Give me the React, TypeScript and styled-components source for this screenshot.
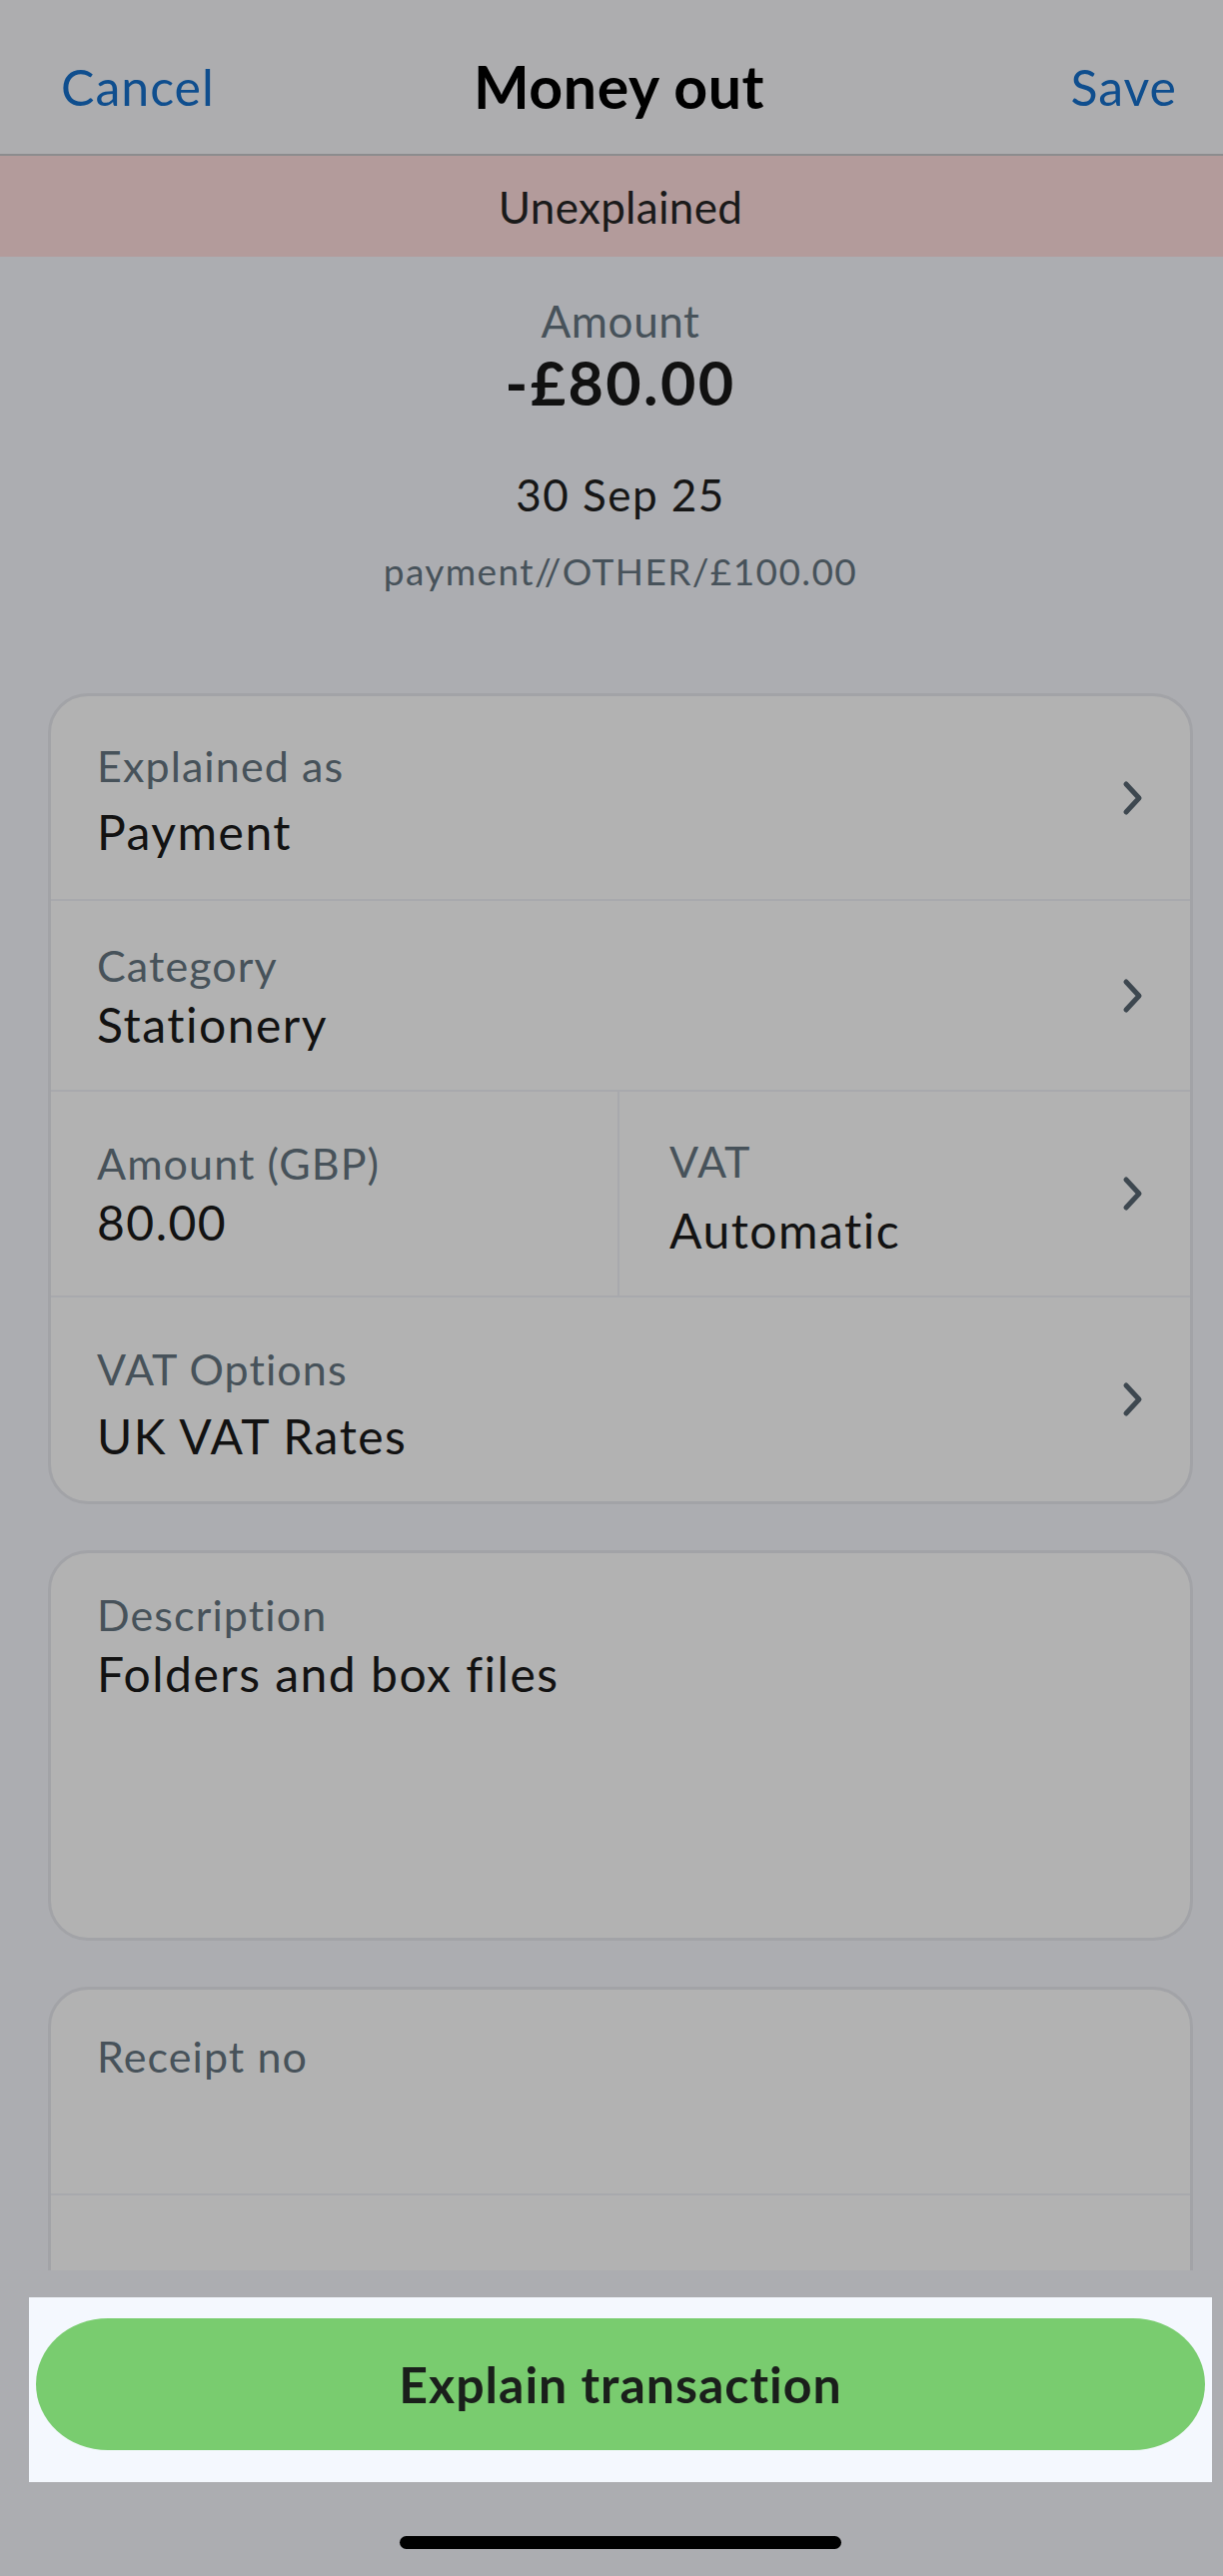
import React from "react";
import styled, { createGlobalStyle } from "styled-components";

const GlobalStyle = createGlobalStyle`
  html, body {
    margin: 0;
    padding: 0;
    background: #acadb1;
    overflow: hidden;
  }
  body {
    font-family: Lato, "Open Sans", sans-serif;
    -webkit-font-smoothing: antialiased;
  }
`;

const Screen = styled.div`
  width: 1242px;
  height: 2579px;
  display: flex;
  flex-direction: column;
  background: #acadb1;
`;

const NavBar = styled.header`
  height: 156px;
  flex: none;
  box-sizing: border-box;
  display: grid;
  grid-template-columns: 1fr auto 1fr;
  align-items: center;
  padding: 20px 64px 0 61px;
  background: #adadaf;
  border-bottom: 2px solid #8c8c8e;
`;

const NavButton = styled.span<{ $align: "left" | "right" }>`
  justify-self: ${(p) => (p.$align === "left" ? "start" : "end")};
  color: #0f4e8e;
  font-size: 50px;
  line-height: 60px;
  letter-spacing: 1px;
`;

const NavTitle = styled.h1`
  margin: 0;
  font-size: 59px;
  line-height: 64px;
  font-weight: 700;
  letter-spacing: 0.6px;
  color: #000;
`;

const StatusBanner = styled.div`
  height: 101px;
  flex: none;
  display: flex;
  align-items: center;
  justify-content: center;
  background: #b39b9b;
  color: #1a1a1a;
  font-size: 44px;
  letter-spacing: 0.3px;
`;

const Scroll = styled.main`
  height: 2016px;
  flex: none;
  overflow: hidden;
  padding: 0 48px;
  display: flex;
  flex-direction: column;
`;

const Summary = styled.section`
  display: flex;
  flex-direction: column;
  align-items: center;
  padding: 36px 0 98px;
`;

const SummaryLabel = styled.div`
  color: #47525a;
  font-size: 44px;
  line-height: 56px;
  letter-spacing: 0.6px;
`;

const SummaryAmount = styled.div`
  margin-top: 2px;
  color: #111;
  font-size: 61px;
  line-height: 64px;
  font-weight: 700;
  letter-spacing: 2.4px;
`;

const SummaryDate = styled.div`
  margin-top: 52px;
  color: #161616;
  font-size: 44px;
  line-height: 56px;
  letter-spacing: 1.5px;
`;

const SummaryRef = styled.div`
  margin-top: 25px;
  color: #47525a;
  font-size: 37px;
  line-height: 48px;
  letter-spacing: 1.4px;
`;

const Card = styled.div<{ $height?: number; $open?: boolean }>`
  flex: none;
  box-sizing: border-box;
  background: #b2b2b2;
  border: 3px solid #a2a3a7;
  border-radius: 40px;
  overflow: hidden;
  margin-bottom: ${(p) => (p.$open ? "0" : "46px")};
  height: ${(p) => (p.$height ? `${p.$height}px` : "auto")};
  ${(p) => p.$open && "border-bottom-left-radius: 0; border-bottom-right-radius: 0;"}
`;

const Row = styled.div<{ $height: number; $last?: boolean }>`
  height: ${(p) => p.$height}px;
  box-sizing: border-box;
  display: flex;
  align-items: stretch;
  border-bottom: ${(p) => (p.$last ? "none" : "2px solid #a8a9ad")};
`;

const Cell = styled.div<{ $divider?: boolean; $inset?: number }>`
  flex: 1;
  display: flex;
  align-items: center;
  padding: 0 45px 0 ${(p) => p.$inset ?? 46}px;
  border-right: ${(p) => (p.$divider ? "2px solid #a8a9ad" : "none")};
`;

const Field = styled.div<{ $gap?: number; $top?: number; $shift?: number }>`
  flex: 1;
  display: flex;
  flex-direction: column;
  align-self: ${(p) => (p.$top !== undefined ? "flex-start" : "center")};
  padding-top: ${(p) => p.$top ?? p.$shift ?? 0}px;
  gap: ${(p) => p.$gap ?? 0}px;
`;

const Label = styled.div`
  color: #47525a;
  font-size: 43px;
  line-height: 56px;
  letter-spacing: 1.1px;
`;

const Value = styled.div`
  color: #121212;
  font-size: 48px;
  line-height: 62px;
  letter-spacing: 1.5px;
`;

const Chevron = () => (
  <svg width="24" height="36" viewBox="0 0 24 36" fill="none">
    <path
      d="M5 4 L18 18 L5 32"
      stroke="#3e4850"
      strokeWidth="5"
      strokeLinecap="round"
      strokeLinejoin="round"
    />
  </svg>
);

const Footer = styled.div`
  margin: 27px 29px 0;
  flex: none;
  height: 185px;
  box-sizing: border-box;
  padding: 21px 7px 0;
  background: #f4f8fe;
`;

const PrimaryButton = styled.button`
  width: 100%;
  height: 132px;
  border: none;
  border-radius: 72px / 66px;
  background: #79cc6f;
  color: #1a1f1b;
  font-family: Lato, "Open Sans", sans-serif;
  font-size: 50px;
  font-weight: 700;
  letter-spacing: 1px;
  cursor: pointer;
`;

const HomeIndicator = styled.div`
  align-self: center;
  margin-top: 54px;
  width: 442px;
  height: 13px;
  border-radius: 7px;
  background: #000;
`;

export default function App() {
  return (
    <>
      <GlobalStyle />
      <Screen>
        <NavBar>
          <NavButton $align="left">Cancel</NavButton>
          <NavTitle>Money out</NavTitle>
          <NavButton $align="right">Save</NavButton>
        </NavBar>
        <StatusBanner>Unexplained</StatusBanner>

        <Scroll>
          <Summary>
            <SummaryLabel>Amount</SummaryLabel>
            <SummaryAmount>-£80.00</SummaryAmount>
            <SummaryDate>30 Sep 25</SummaryDate>
            <SummaryRef>payment//OTHER/£100.00</SummaryRef>
          </Summary>

          <Card>
            <Row $height={205}>
              <Cell>
                <Field $gap={7} $shift={6}>
                  <Label>Explained as</Label>
                  <Value>Payment</Value>
                </Field>
                <Chevron />
              </Cell>
            </Row>
            <Row $height={191}>
              <Cell>
                <Field $shift={2}>
                  <Label>Category</Label>
                  <Value>Stationery</Value>
                </Field>
                <Chevron />
              </Cell>
            </Row>
            <Row $height={206}>
              <Cell $divider>
                <Field $shift={2}>
                  <Label>Amount (GBP)</Label>
                  <Value>80.00</Value>
                </Field>
              </Cell>
              <Cell $inset={50}>
                <Field $gap={10} $shift={8}>
                  <Label>VAT</Label>
                  <Value>Automatic</Value>
                </Field>
                <Chevron />
              </Cell>
            </Row>
            <Row $height={204} $last>
              <Cell>
                <Field $gap={8} $shift={10}>
                  <Label>VAT Options</Label>
                  <Value>UK VAT Rates</Value>
                </Field>
                <Chevron />
              </Cell>
            </Row>
          </Card>

          <Card $height={391}>
            <Row $height={385} $last>
              <Cell>
                <Field $top={34}>
                  <Label>Description</Label>
                  <Value>Folders and box files</Value>
                </Field>
              </Cell>
            </Row>
          </Card>

          <Card $open>
            <Row $height={206}>
              <Cell>
                <Field $top={39}>
                  <Label>Receipt no</Label>
                </Field>
              </Cell>
            </Row>
            <Row $height={200} $last>
              <Cell />
            </Row>
          </Card>
        </Scroll>

        <Footer>
          <PrimaryButton>Explain transaction</PrimaryButton>
        </Footer>
        <HomeIndicator />
      </Screen>
    </>
  );
}
